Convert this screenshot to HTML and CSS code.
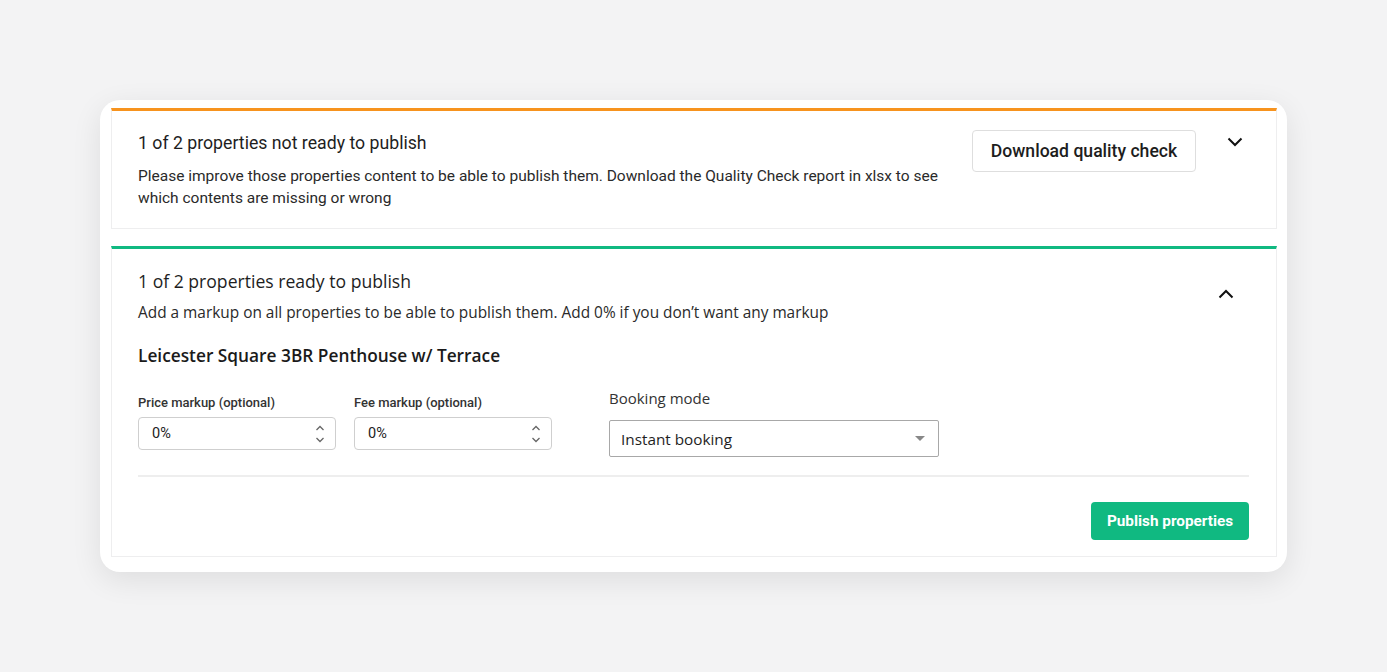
FILE: index.html
```html
<!DOCTYPE html>
<html lang="en">
<head>
  <meta charset="UTF-8">
  <title>Publish properties</title>
  <link rel="stylesheet" href="styles.css">
</head>
<body>
  <div class="card">

    <!-- Not ready block -->
    <section class="panel panel-warn">
      <div class="panel-text">
        <h2 class="panel-title roboto">1 of 2 properties not ready to publish</h2>
        <p class="panel-desc roboto">Please improve those properties content to be able to publish them. Download the Quality Check report in xlsx to see which contents are missing or wrong</p>
      </div>
      <button class="btn-outline">Download quality check</button>
      <span class="chevron chevron-down">
        <svg width="16" height="10" viewBox="0 0 16 10"><path d="M1.5 1.5 L8 8 L14.5 1.5" fill="none" stroke="#111" stroke-width="2"/></svg>
      </span>
    </section>

    <!-- Ready block -->
    <section class="panel panel-ok">
      <div class="ok-head">
        <div>
          <h2 class="panel-title sans">1 of 2 properties ready to publish</h2>
          <p class="ok-desc sans">Add a markup on all properties to be able to publish them. Add 0% if you don’t want any markup</p>
        </div>
        <span class="chevron chevron-up">
          <svg width="16" height="10" viewBox="0 0 16 10"><path d="M1.5 8.5 L8 2 L14.5 8.5" fill="none" stroke="#111" stroke-width="2"/></svg>
        </span>
      </div>

      <h3 class="prop-name">Leicester Square 3BR Penthouse w/ Terrace</h3>

      <div class="fields">
        <div class="field">
          <label class="field-label">Price markup (optional)</label>
          <div class="num-input">
            <span>0%</span>
            <svg width="10" height="18" viewBox="0 0 10 18"><path d="M1.5 5 L5 1.5 L8.5 5 M1.5 13 L5 16.5 L8.5 13" fill="none" stroke="#666" stroke-width="1.3"/></svg>
          </div>
        </div>
        <div class="field">
          <label class="field-label">Fee markup (optional)</label>
          <div class="num-input">
            <span>0%</span>
            <svg width="10" height="18" viewBox="0 0 10 18"><path d="M1.5 5 L5 1.5 L8.5 5 M1.5 13 L5 16.5 L8.5 13" fill="none" stroke="#666" stroke-width="1.3"/></svg>
          </div>
        </div>
        <div class="field field-select">
          <label class="select-label">Booking mode</label>
          <div class="select">
            <span>Instant booking</span>
            <span class="caret"></span>
          </div>
        </div>
      </div>

      <div class="panel-foot">
        <button class="btn-publish">Publish properties</button>
      </div>
    </section>

  </div>
</body>
</html>
```

FILE: styles.css
```css
/* reset */
* {
  margin: 0;
  padding: 0;
  box-sizing: border-box;
}

body {
  background: #f3f3f4;
  padding: 100px;
  font-family: 'Roboto', sans-serif;
  color: #222;
}

.roboto { font-family: 'Roboto', sans-serif; }
.sans { font-family: 'Open Sans', sans-serif; }

.card {
  background: #fff;
  border-radius: 20px;
  box-shadow: 0 8px 30px rgba(0, 0, 0, 0.09);
  padding: 8px 10px 15px 11px;
  display: flex;
  flex-direction: column;
  gap: 17px;
}

.panel {
  border: 1px solid #eeeeef;
  border-top: 3px solid #f7931e;
  padding: 20px 26px 19px 26px;
}

.panel-warn {
  display: flex;
  align-items: flex-start;
}

.panel-ok {
  border-top-color: #10b981;
  padding: 20px 27px 16px 26px;
}

.panel-text {
  flex: 1;
  padding-right: 30px;
}

.panel-title {
  font-size: 17.7px;
  font-weight: 400;
  line-height: 24px;
  color: #1e1e1e;
}

.panel-title.sans {
  font-size: 17.6px;
}

.panel-desc {
  margin-top: 10px;
  font-size: 15.5px;
  line-height: 22px;
  color: #2a2a2a;
}

.btn-outline {
  font-family: 'Roboto', sans-serif;
  font-size: 17.6px;
  font-weight: 500;
  color: #1d1d1d;
  background: #fff;
  border: 1px solid #dedede;
  border-radius: 4px;
  height: 42px;
  width: 224px;
  margin-top: -1px;
  flex-shrink: 0;
}

.chevron {
  display: flex;
}

.chevron-down {
  margin: 6px 7px 0 31px;
}

.ok-head {
  display: flex;
  justify-content: space-between;
}

.chevron-up {
  margin: 20px 15px 0 0;
}

.ok-desc {
  margin-top: 10px;
  font-size: 15.4px;
  line-height: 20px;
  color: #2a2a2a;
}

.prop-name {
  font-family: 'Open Sans', sans-serif;
  font-size: 17.3px;
  font-weight: 600;
  line-height: 24px;
  color: #1a1a1a;
  margin-top: 21px;
}

.fields {
  display: flex;
  align-items: flex-start;
  margin-top: 20px;
  padding-bottom: 18px;
  border-bottom: 2px solid #eeeeee;
}

.field {
  width: 198px;
  margin-right: 18px;
  margin-top: 7px;
}

.field-select {
  width: 330px;
  margin: 0 0 0 39px;
}

.field-label {
  display: block;
  font-size: 13px;
  font-weight: 500;
  color: #333;
  line-height: 16px;
  margin-bottom: 6px;
}

.num-input {
  height: 33px;
  border: 1px solid #cfcfcf;
  border-radius: 4px;
  display: flex;
  align-items: center;
  justify-content: space-between;
  padding: 0 10px 0 13px;
  font-size: 14.5px;
  color: #222;
}

.select-label {
  display: block;
  font-family: 'Open Sans', sans-serif;
  font-size: 15px;
  line-height: 20px;
  color: #333;
  margin-bottom: 12px;
}

.select {
  height: 37px;
  border: 1px solid #a8a8a8;
  border-radius: 2px;
  display: flex;
  align-items: center;
  justify-content: space-between;
  padding: 0 13px 0 11px;
  font-family: 'Open Sans', sans-serif;
  font-size: 15.3px;
  color: #1e1e1e;
}

.caret {
  width: 0;
  height: 0;
  border-left: 5px solid transparent;
  border-right: 5px solid transparent;
  border-top: 5px solid #888;
}

.panel-foot {
  display: flex;
  justify-content: flex-end;
  padding-top: 25px;
}

.btn-publish {
  font-family: 'Roboto', sans-serif;
  font-size: 15.3px;
  font-weight: 700;
  color: #fff;
  background: #10b981;
  border: none;
  border-radius: 4px;
  height: 38px;
  width: 158px;
}
```
